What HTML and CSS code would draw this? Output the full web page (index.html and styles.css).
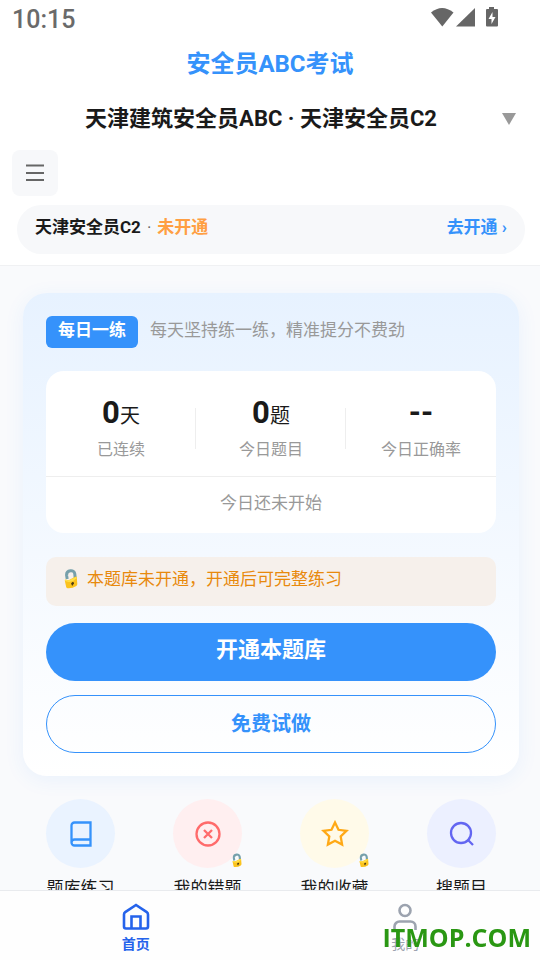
FILE: index.html
```html
<!DOCTYPE html>
<html lang="zh-CN">
<head>
<meta charset="utf-8">
<meta name="viewport" content="width=device-width, initial-scale=1">
<title>安全员ABC考试</title>
<link rel="stylesheet" href="styles.css">
</head>
<body>
<svg class="defs" width="0" height="0" aria-hidden="true">
  <symbol id="lock" viewBox="0 0 14 20">
    <path d="M3.200 10 2.600 6.400C2.400 3.600 4 2 6.400 1.700 8.800 1.400 10.600 2.800 10.800 5L11.200 9" fill="none" stroke="#76a0ab" stroke-width="3"/>
    <path d="M.8 11.800Q.6 10.800 1.600 10.600L4.600 11.200 11.200 7.800Q12.600 7.200 12.800 8.600L13.300 15Q13.400 16.300 12.300 16.900 8.500 19.500 3.800 19.200 2.500 19.200 2.200 18Z" fill="#fbc31e"/>
    <path d="M1 12Q.8 10.800 1.800 10.800L4.600 11.600 11.400 8.200Q12.600 7.800 12.800 9L9 12 5 13Z" fill="#ffe04a"/>
    <circle cx="8.800" cy="14.200" r="1.200" fill="#4d3d12"/>
    <path d="M7 14.200h2L9 16.500h-1z" fill="#4d3d12"/>
  </symbol>
</svg>
<div class="app">
  <div class="status">
    <span class="clock">10:15</span>
    <svg class="status-icons" width="68" height="22" viewBox="0 0 68 22" fill="#666">
      <path d="M1 5.500Q12-3.500 23.500 5.500L12.300 19.500Z"/>
      <path d="M45 1v18.500H26Z"/>
      <path fill-rule="evenodd" d="M59 0h5v2h3q1 0 1 1v15.500q0 1-1 1H57q-1 0-1-1V3q0-1 1-1h2zM62.500 5 58.500 12h3v5l4-7h-3z"/>
    </svg>
  </div>
  <header class="header">
    <h1 class="title">安全员ABC考试</h1>
    <div class="picker">
      <select class="picker-select" aria-label="选择题库">
        <option>天津建筑安全员ABC · 天津安全员C2</option>
      </select>
      <svg class="picker-arrow" width="14" height="12" viewBox="0 0 14 12"><path d="M0 0h14L7 12z" fill="#999"/></svg>
    </div>
    <button class="menu" type="button" aria-label="菜单">
      <svg width="18" height="18" viewBox="0 0 18 18" stroke="#666" stroke-width="2"><path d="M0 1.500h18M0 9h18M0 16h18"/></svg>
    </button>
    <div class="pill">
      <span class="pill-text"><b>天津安全员C2</b><span class="dot">·</span><b class="locked">未开通</b></span>
      <a class="pill-link" href="#open">去开通 ›</a>
    </div>
  </header>
  <main class="content">
    <section class="card">
      <div class="card-head">
        <h2 class="tag">每日一练</h2>
        <p class="sub">每天坚持练一练，精准提分不费劲</p>
      </div>
      <div class="stats">
        <div class="stats-row">
          <div class="stat"><div class="value"><b>0</b>天</div><div class="label">已连续</div></div>
          <div class="stat"><div class="value"><b>0</b>题</div><div class="label">今日题目</div></div>
          <div class="stat"><div class="value"><b>--</b></div><div class="label">今日正确率</div></div>
        </div>
        <p class="today">今日还未开始</p>
      </div>
      <p class="notice"><svg width="14" height="20"><use href="#lock"/></svg>本题库未开通，开通后可完整练习</p>
      <button class="btn primary" id="open" type="button">开通本题库</button>
      <button class="btn outline" type="button">免费试做</button>
    </section>
    <div class="grid">
      <a class="entry" href="#practice">
        <span class="circle blue"><svg width="28" height="28" viewBox="0 0 28 28"><path d="M23.500 2.500H7.500a3 3 0 0 0-3 3v17a3 3 0 0 0 3 3h16zM23.500 19.500H7.500a3 3 0 0 0-3 3"/></svg></span>
        <span>题库练习</span>
      </a>
      <a class="entry" href="#wrong">
        <span class="circle red"><svg width="28" height="28" viewBox="0 0 28 28"><circle cx="14" cy="14" r="11.500"/><path d="m10 10 8 8m0-8-8 8"/></svg><svg class="badge" width="10" height="15"><use href="#lock"/></svg></span>
        <span>我的错题</span>
      </a>
      <a class="entry" href="#favorite">
        <span class="circle yellow"><svg width="28" height="28" viewBox="0 0 28 28"><path d="m14 2.500 3.500 7.300 8 1.100-5.800 5.600 1.400 8L14 20.700l-7.100 3.800 1.400-8-5.800-5.600 8-1.100z"/></svg><svg class="badge" width="10" height="15"><use href="#lock"/></svg></span>
        <span>我的收藏</span>
      </a>
      <a class="entry" href="#search">
        <span class="circle indigo"><svg width="28" height="28" viewBox="0 0 28 28"><circle cx="13" cy="13" r="10"/><path d="m19.500 19.500 5.500 5.500"/></svg></span>
        <span>搜题目</span>
      </a>
    </div>
  </main>
  <nav class="nav">
    <a class="tab active" href="#home">
      <svg width="28" height="28" viewBox="0 0 28 28"><path d="M2 11.500Q2 10 3.200 9.200L14 2l10.800 7.200Q26 10 26 11.500V23.500a2 2 0 0 1-2 2H4a2 2 0 0 1-2-2zM9.500 25V13.500h9V25"/></svg>
      <span>首页</span>
    </a>
    <a class="tab" href="#mine">
      <svg width="28" height="28" viewBox="0 0 28 28"><circle cx="14" cy="7.500" r="5.500"/><path d="M3.500 27v-3.500a5 5 0 0 1 5-5h11a5 5 0 0 1 5 5V27"/></svg>
      <span>我的</span>
    </a>
  </nav>
</div>
<div class="watermark">ITMOP.COM</div>
</body>
</html>
```

FILE: styles.css
```css
* { box-sizing: border-box; }
body, h1, h2, p { margin: 0; }
body {
  font-family: Roboto, "Noto Sans CJK SC", sans-serif;
  font-size: 17px;
  line-height: 24px;
  color: #1a1a1a;
  background: #f9fafc;
}
a { text-decoration: none; color: inherit; }
button, select { font: inherit; border: 0; cursor: pointer; }
svg { display: block; fill: none; flex: none; }
.defs { position: absolute; }

.app { display: flex; flex-direction: column; height: 100vh; overflow: hidden; }

.status {
  display: flex;
  justify-content: space-between;
  align-items: center;
  height: 40px;
  padding: 0 42px 0 12px;
  background: #fff;
}
.clock { font-size: 25px; font-weight: 500; color: #6a6a6a; }
.status-icons { fill: #666; margin-bottom: 4px; }

.header { background: #fff; padding: 8px 12px 11px; border-bottom: 1px solid #f0f1f3; }
.title { font-size: 24px; line-height: 32px; color: #3592fb; text-align: center; }
.picker { position: relative; margin-top: 21px; }
.picker-select {
  appearance: none;
  display: block;
  width: 100%;
  height: 36px;
  padding: 0 30px 0 12px;
  background: none;
  color: #1a1a1a;
  font-size: 22px;
  font-weight: 700;
  text-align: center;
  text-align-last: center;
}
.picker-arrow { position: absolute; right: 12px; top: 12px; pointer-events: none; }
.menu {
  display: grid;
  place-items: center;
  width: 46px;
  height: 46px;
  margin-top: 13px;
  padding: 0;
  border-radius: 8px;
  background: #f7f8fa;
}
.pill {
  display: flex;
  justify-content: space-between;
  margin: 9px 3px 0 5px;
  padding: 10px 18px 15px;
  border-radius: 25px;
  background: #f7f8fa;
}
.dot { padding: 0 6px; color: #666; }
.locked { color: #ff9f43; }
.pill-link { color: #3592fb; font-weight: 700; }

.content { flex: 1; min-height: 0; padding: 27px 21px 24px 23px; overflow-y: auto; scrollbar-width: none; }
.card {
  padding: 23px;
  border-radius: 24px;
  background: linear-gradient(#e7f2ff, #fff);
  box-shadow: 0 4px 20px #3592fb14;
}
.card-head { display: flex; gap: 12px; }
.tag {
  padding: 2px 12px 6px;
  border-radius: 6px;
  background: #3592fb;
  color: #fff;
  font-size: 17px;
  line-height: 24px;
}
.sub { padding-top: 2px; color: #999; }
.stats { margin-top: 23px; border-radius: 18px; background: #fff; }
.stats-row { display: grid; grid-template-columns: repeat(3, 1fr); padding: 22px 0 14px; }
.stat { position: relative; text-align: center; }
.stat + .stat::before {
  content: "";
  position: absolute;
  left: -1px;
  top: 15px;
  width: 1px;
  height: 41px;
  background: #eee;
}
.value { font-size: 20px; line-height: 40px; }
.value b { font-size: 31px; }
.label { margin-top: 2px; font-size: 16px; line-height: 24px; color: #999; }
.today { padding: 14px 0 18px; border-top: 1px solid #eee; text-align: center; color: #999; }
.notice {
  display: flex;
  align-items: center;
  gap: 9px;
  margin-top: 24px;
  padding: 10px 18px 15px;
  border-radius: 10px;
  background: #f6f0eb;
  color: #e8890c;
}
.btn { display: block; width: 100%; height: 58px; border-radius: 29px; }
.primary { margin-top: 17px; padding: 0 0 4px; background: #3592fb; color: #fff; font-size: 22px; font-weight: 700; }
.outline { margin-top: 14px; padding: 0; border: 1px solid #3592fb; background: none; color: #3592fb; font-size: 20px; font-weight: 700; }

.grid { display: flex; justify-content: space-between; margin-top: 23px; padding: 0 23px; }
.entry { display: flex; flex-direction: column; align-items: center; gap: 8px; }
.circle {
  position: relative;
  display: grid;
  place-items: center;
  width: 69px;
  height: 69px;
  border-radius: 50%;
  stroke-width: 2.3;
}
.blue { background: #eaf3ff; stroke: #3592fb; }
.red { background: #ffeff0; stroke: #ff6b6b; }
.yellow { background: #fffae9; stroke: #ffa916; }
.indigo { background: #ecf0ff; stroke: #6366f1; }
.badge { position: absolute; right: 0; bottom: 0; stroke: none; }

.nav { display: flex; height: 70px; padding-left: 1px; background: #fefefe; border-top: 1px solid #e9ebee; }
.tab {
  flex: 1;
  display: flex;
  flex-direction: column;
  align-items: center;
  gap: 3px;
  padding-top: 12px;
  font-size: 14px;
  line-height: 20px;
  color: #9ca3af;
  stroke: #9ca3af;
  stroke-width: 2.6;
}
.tab span { stroke: none; }
.active { color: #2563eb; stroke: #2563eb; font-weight: 700; }
.watermark {
  position: fixed;
  right: 9px;
  bottom: 6px;
  font: 700 25px/34px "Open Sans", sans-serif;
  color: #2a9713;
  pointer-events: none;
}
```
